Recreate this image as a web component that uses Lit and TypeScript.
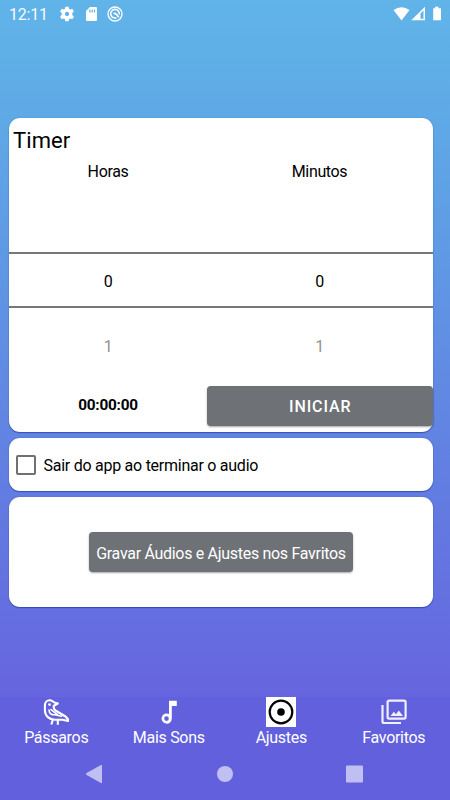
import { LitElement, html, css, svg } from "lit";
import { customElement } from "lit/decorators.js";

const gear = svg`<path fill-rule="evenodd" d="M9.500 1h5l.6 3.200 1.700 1 3.100-1.100 2.500 4.300-2.500 2.200v2.800l2.500 2.200-2.500 4.300-3.100-1.100-1.700 1-.6 3.200h-5l-.6-3.200-1.700-1-3.100 1.100-2.500-4.300 2.500-2.200v-2.800L1.600 8.400l2.500-4.300 3.100 1.100 1.700-1zM12 15.200a3.200 3.200 0 1 0 0-6.400 3.200 3.200 0 0 0 0 6.400z"/>`;
const bird = svg`<g fill="none" stroke="#fff" stroke-width="2.100" stroke-linejoin="round" stroke-linecap="round"><path d="M1.900 11.300V6.200C1.900 3.300 3.900 1.300 6.700 1.300 9 1.300 10.200 3 12.200 3.700L14.800 4.500 10.700 6.900C10.500 9.500 11.200 10.900 13.300 12L22.500 17.500 25 20.300V22L19.500 20.700H12C6.300 20.700 1.900 17 1.900 11.300Z"/><path d="M6 11C6.200 15 9 16 12 15.700L18.500 17.300M8 10.600 14.500 15.700" stroke-width="1.600"/><path d="M9.800 21 8.300 25.500M14.800 21V25.800" stroke-linecap="butt"/></g><circle cx="6.500" cy="5.600" r="1.300"/>`;

@customElement("app-root")
export class AppRoot extends LitElement {
  static styles = css`
    :host {
      display: flex; flex-direction: column; box-sizing: border-box;
      width: 450px; height: 800px; overflow: hidden;
      font-family: Roboto, sans-serif; font-size: 16px; letter-spacing: -.35px; color: #000;
      background: linear-gradient(180deg, #60b4e8 0%, #5fa8e6 16%, #5f99e5 32%, #627ee1 60%, #6665df 87%);
    }
    svg { display: block; fill: #fff; flex: none; }
    .status { height: 27px; display: flex; align-items: center; color: #fff; padding: 0 8px 0 9px; box-sizing: border-box; }
    .time { width: 50px; opacity: .95; line-height: 27px; letter-spacing: -.2px; padding-top: 1px; }
    .gap { flex: 1; }
    .cards { height: 670px; padding: 91px 17px 0 9px; box-sizing: border-box; display: flex; flex-direction: column; gap: 6.5px; }
    .card { background: #fff; border-radius: 11px; box-shadow: 0 1px 1px rgba(10,40,140,.5), 0 0 2px rgba(20,40,120,.2); box-sizing: border-box; }
    .timer { height: 313.8px; display: flex; flex-direction: column; }
    .title { font-size: 22px; line-height: 26px; padding: 10px 0 0 4px; height: 35px; letter-spacing: .1px; box-sizing: border-box; }
    .row { display: grid; grid-template-columns: 198px 225px; text-align: center; }
    .heads { line-height: 20px; height: 99px; padding-top: 9px; box-sizing: border-box; }
    .sel { border: solid #777; border-width: 2px 0; height: 56px; box-sizing: border-box; line-height: 55px; }
    .next { height: 77.5px; line-height: 78px; color: #929292; }
    .foot { align-items: center; height: 40px; }
    .count { font-weight: 700; font-size: 15.3px; letter-spacing: -.2px; line-height: 38px; padding-bottom: 2px; }
    .btn { background: #6e7176; color: #fff; border-radius: 4px; box-shadow: 0 1px 2px rgba(0,0,0,.35); display: flex; align-items: center; justify-content: center; height: 40px; box-sizing: border-box; white-space: nowrap; }
    .start { font-weight: 500; letter-spacing: .9px; padding: 1px 0 0 1px; width: 225.5px; }
    .check { height: 52.7px; display: flex; align-items: center; padding: 1px 7px 0; gap: 7.5px; letter-spacing: -.26px; }
    .box { width: 20px; height: 20px; border: 2px solid #707070; border-radius: 2px; box-sizing: border-box; }
    .save { height: 109.3px; display: flex; align-items: center; justify-content: center; }
    .wide { width: 263.5px; letter-spacing: -.3px; padding-top: 2px; }
    .tabs { background: #6360de; height: 54px; display: grid; grid-template-columns: repeat(4, 112.5px); color: #fff; letter-spacing: -.3px; }
    .tab { display: flex; flex-direction: column; align-items: center; line-height: 22px; }
    .ico { height: 30px; width: 30px; display: flex; align-items: center; justify-content: center; flex: none; }
    .lit { background: #fff; }
    .sys { background: #6360de; flex: 1; }
  `;

  render() {
    return html`
      <div class="status">
        <span class="time">12:11</span>
        <svg width="16" height="16" viewBox="0 0 24 24">${gear}</svg>
        <svg width="31" height="16" viewBox="0 0 31 16"><path fill-rule="evenodd" d="M15 1h6q1 0 1 1v12q0 1-1 1H12q-1 0-1-1V5zM14.300 3.500v3h1.200v-3zm2.300 0v3h1.200v-3zm2.300 0v3h1.200v-3z"/></svg>
        <svg width="17" height="16" viewBox="0 0 17 16"><g fill="none" stroke="#fff"><circle cx="9" cy="8" r="7" stroke-width="1.300"/><path d="M10.500 11.700A4.300 4.300 0 1 1 13.200 8.500M7.500 7.500Q9.800 6.800 12.800 11.300" stroke-width="1.600"/></g></svg>
        <span class="gap"></span>
        <svg width="50" height="16" viewBox="0 0 50 16"><path d="M1.500 4Q9.500-1.700 17.500 4L9.500 14.500Z"/><path fill-rule="evenodd" d="M33 .8V14.300H19.300ZM28.500 7.500V12.800H31.500V4.600Z"/><path d="M43 .8h3.500v1.500H49V14.300H41.200V2.300H43z"/></svg>
      </div>
      <div class="cards">
        <section class="card timer">
          <div class="title">Timer</div>
          <div class="row heads"><span>Horas</span><span>Minutos</span></div>
          <div class="row sel"><span>0</span><span>0</span></div>
          <div class="row next"><span>1</span><span>1</span></div>
          <div class="row foot"><span class="count">00:00:00</span><div class="btn start">INICIAR</div></div>
        </section>
        <section class="card check"><span class="box"></span><span>Sair do app ao terminar o audio</span></section>
        <section class="card save"><div class="btn wide">Gravar Áudios e Ajustes nos Favritos</div></section>
      </div>
      <div class="tabs">
        <div class="tab"><div class="ico"><svg width="26" height="27" viewBox="0 0 26 27">${bird}</svg></div>Pássaros</div>
        <div class="tab"><div class="ico"><svg width="16" height="24" viewBox="0 0 16 24"><path fill-rule="evenodd" d="M8 .8H15.800V6H10.800V18.500A5.100 5.100 0 1 1 8 14ZM5.500 16.300A2.300 2.300 0 1 0 5.500 20.900 2.300 2.300 0 0 0 5.500 16.300Z"/></svg></div>Mais Sons</div>
        <div class="tab"><div class="ico lit"><svg width="30" height="30" viewBox="0 0 30 30"><circle cx="15" cy="15" r="11.300" fill="none" stroke="#000" stroke-width="2.200"/><circle cx="15" cy="15" r="3.800" fill="#000"/></svg></div>Ajustes</div>
        <div class="tab"><div class="ico"><svg width="26" height="26" viewBox="0 0 26 26" opacity=".9"><path d="M1.500 6V22.500Q1.500 24 3 24H20" fill="none" stroke="#fff" stroke-width="2.200"/><rect x="6.600" y="1.600" width="18" height="18" rx="1.500" fill="none" stroke="#fff" stroke-width="2.200"/><path d="M9.500 17 12.800 12.800 15 15.200 17.800 11.500 22 17Z"/></svg></div>Favoritos</div>
      </div>
      <div class="sys">
        <svg width="450" height="49" viewBox="0 0 450 49" opacity=".6"><path d="M86.600 22 101 13.900Q102 13.500 102 14.500V31.500Q102 32.500 101 32L86.600 24Q85.400 23 86.600 22Z"/><circle cx="225" cy="23" r="8"/><rect x="346" y="14.500" width="17" height="17" rx="1"/></svg>
      </div>
    `;
  }
}
